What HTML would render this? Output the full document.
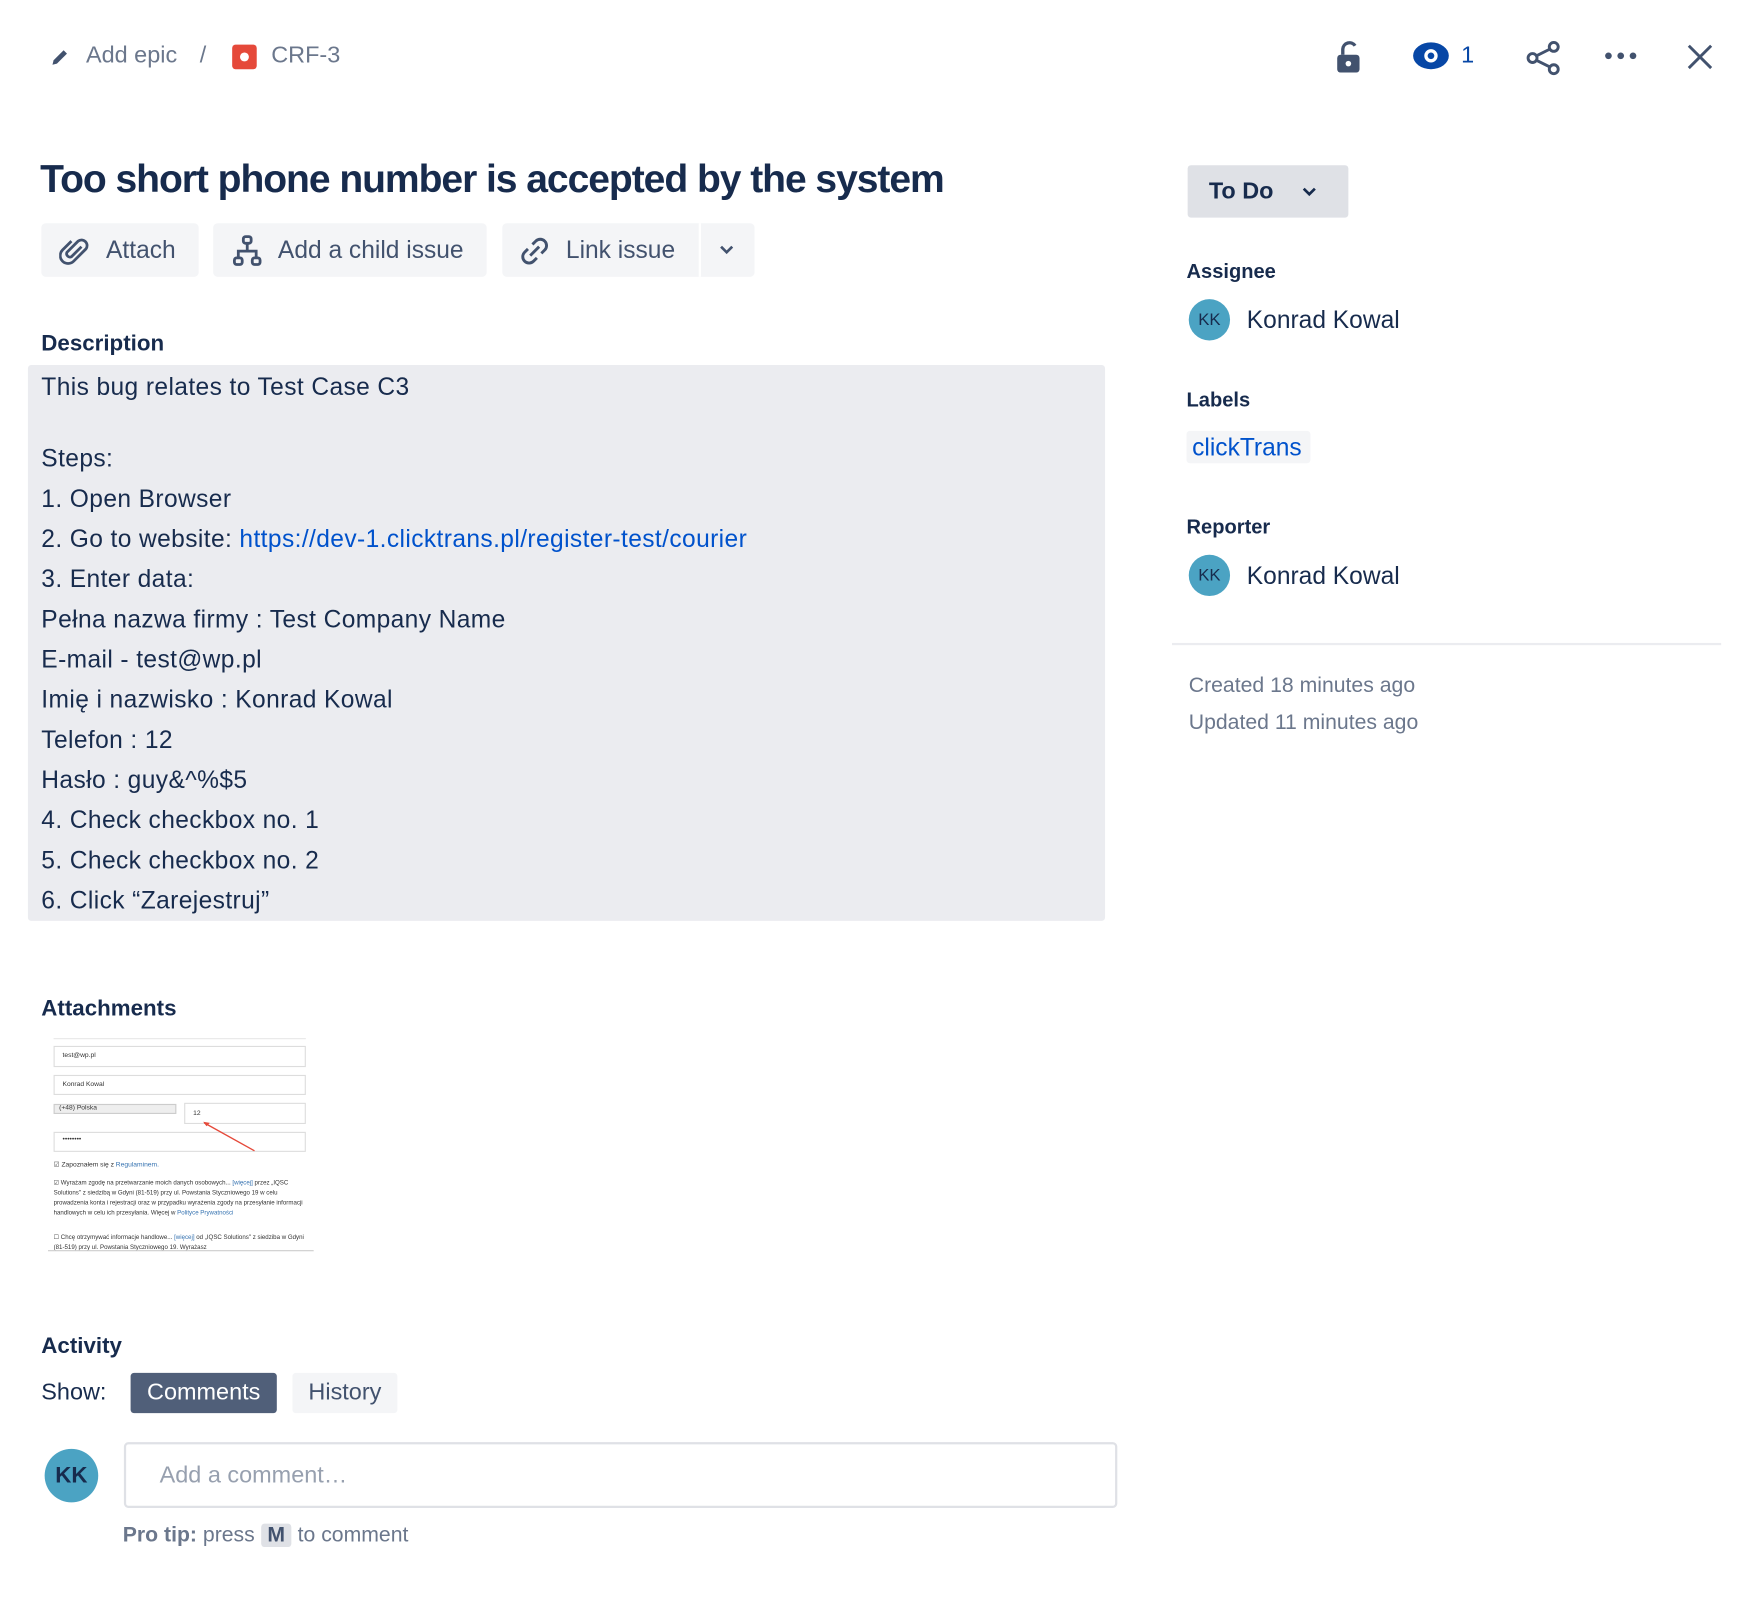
<!DOCTYPE html>
<html><head><meta charset="utf-8"><style>
*{margin:0;padding:0;box-sizing:border-box}
html,body{width:1750px;height:1614px;overflow:hidden;background:#fff}
#w{position:absolute;left:0;top:0;width:1570px;height:1446px;transform:scale(1.1162);transform-origin:0 0;font-family:"Liberation Sans",sans-serif;color:#172b4d}
.a{position:absolute;white-space:nowrap}
.btn{position:absolute;background:#f4f5f7;border-radius:4px;top:200px;height:48px;font-size:22px;color:#42526e;line-height:48px}
.desc div{height:36px;line-height:36px;font-size:22px;letter-spacing:0.35px}
.lbl{font-size:18px;font-weight:bold}
.av{position:absolute;border-radius:50%;background:#4ba3c3;color:#172b4d;text-align:center;font-weight:bold}
.gr{font-size:19px;color:#6b778c}
</style></head><body><div id="w">
<svg class="a" style="left:44px;top:41px" width="20" height="20" viewBox="0 0 20 20"><path d="M3 17l1-4L13 4l3 3-9 9z" fill="#42526e"/></svg>
<div class="a" style="left:77px;top:38px;font-size:21px;color:#6b778c">Add epic</div>
<div class="a" style="left:179px;top:38px;font-size:21px;color:#6b778c">/</div>
<div class="a" style="left:208px;top:40px;width:22px;height:22px;background:#e5493a;border-radius:3px"><div style="position:absolute;left:7px;top:7px;width:8px;height:8px;border-radius:50%;background:#fff"></div></div>
<div class="a" style="left:243px;top:38px;font-size:21px;color:#6b778c">CRF-3</div>
<svg class="a" style="left:1195px;top:35px" width="28" height="32" viewBox="0 0 28 32"><path d="M8 14V9a6 6 0 0 1 11-3" fill="none" stroke="#42526e" stroke-width="3"/><rect x="3" y="14" width="20" height="16" rx="3" fill="#42526e"/><circle cx="13" cy="22" r="2.5" fill="#fff"/></svg>
<svg class="a" style="left:1265px;top:37px" width="34" height="26" viewBox="0 0 34 26"><ellipse cx="17" cy="13" rx="16" ry="12" fill="#0747a6"/><circle cx="17" cy="13" r="6" fill="#fff"/><circle cx="17" cy="13" r="3" fill="#0747a6"/></svg>
<div class="a" style="left:1309px;top:38px;font-size:21px;color:#0747a6">1</div>
<svg class="a" style="left:1366px;top:35px" width="34" height="34" viewBox="0 0 34 34"><g fill="none" stroke="#42526e" stroke-width="2.6"><circle cx="26" cy="7" r="4"/><circle cx="7" cy="17" r="4"/><circle cx="26" cy="27" r="4"/><path d="M10.5 15l12-6M10.5 19l12 6"/></g></svg>
<svg class="a" style="left:1436px;top:45px" width="34" height="10" viewBox="0 0 34 10"><circle cx="5" cy="5" r="3" fill="#42526e"/><circle cx="16" cy="5" r="3" fill="#42526e"/><circle cx="27" cy="5" r="3" fill="#42526e"/></svg>
<svg class="a" style="left:1510px;top:38px" width="26" height="26" viewBox="0 0 26 26"><path d="M3 3l20 20M23 3L3 23" stroke="#42526e" stroke-width="2.6"/></svg>
<div class="a" style="left:36px;top:141px;font-size:35px;font-weight:bold;letter-spacing:-0.95px">Too short phone number is accepted by the system</div>
<div class="btn" style="left:37px;width:141px"><svg class="a" style="left:16px;top:11px" width="28" height="28" viewBox="0 0 28 28"><path d="M20 10l-9 9a3 3 0 0 1-4-4l10-10a5 5 0 0 1 7 7L13 23a7 7 0 0 1-10-10l8-8" fill="none" stroke="#42526e" stroke-width="2.5"/></svg><span class="a" style="left:58px">Attach</span></div>
<div class="btn" style="left:191px;width:245px"><svg class="a" style="left:16px;top:10px" width="30" height="30" viewBox="0 0 30 30"><g fill="none" stroke="#42526e" stroke-width="2.5"><rect x="11" y="2" width="7" height="6" rx="2"/><rect x="3" y="21" width="7" height="6" rx="2"/><rect x="19" y="21" width="7" height="6" rx="2"/><path d="M14.5 8v7M6.5 21v-6h16v6"/></g></svg><span class="a" style="left:58px">Add a child issue</span></div>
<div class="btn" style="left:450px;width:226px"><svg class="a" style="left:14px;top:10px" width="30" height="30" viewBox="0 0 30 30"><g fill="none" stroke="#42526e" stroke-width="2.6"><path d="M13 9l3-3a5 5 0 0 1 8 8l-3 3"/><path d="M17 21l-3 3a5 5 0 0 1-8-8l3-3"/><path d="M11 19l8-8"/></g></svg><span class="a" style="left:57px">Link issue</span><div class="a" style="left:176px;top:0;width:2px;height:48px;background:#fff"></div><svg class="a" style="left:195px;top:20px" width="12" height="8" viewBox="0 0 12 8"><path d="M1 1l5 5 5-5" fill="none" stroke="#42526e" stroke-width="2.4"/></svg></div>
<div class="a lbl" style="left:37px;top:297px;font-size:20px">Description</div>
<div class="a desc" style="left:25px;top:327px;width:965px;height:498px;background:#ebecf0;border-radius:3px;padding:2px 12px">
<div>This bug relates to Test Case C3</div>
<div style="height:28px"></div>
<div>Steps:</div>
<div>1. Open Browser</div>
<div>2. Go to website: <span style="color:#0052cc">https://dev-1.clicktrans.pl/register-test/courier</span></div>
<div>3. Enter data:</div>
<div>Pełna nazwa firmy : Test Company Name</div>
<div>E-mail - test@wp.pl</div>
<div>Imię i nazwisko : Konrad Kowal</div>
<div>Telefon : 12</div>
<div>Hasło : guy&amp;^%$5</div>
<div>4. Check checkbox no. 1</div>
<div>5. Check checkbox no. 2</div>
<div>6. Click “Zarejestruj”</div>
</div>
<div class="a lbl" style="left:37px;top:893px;font-size:20px">Attachments</div>
<div class="a" style="left:43px;top:930px;width:238px;height:191px;border-bottom:1px solid #ccc;overflow:hidden;font-size:6px;color:#333">
<div class="a" style="left:5px;top:0;width:226px;height:1px;background:#e5e5e5"></div>
<div class="a" style="left:5px;top:7px;width:226px;height:19px;border:1px solid #ddd;padding:5px 7px">test@wp.pl</div>
<div class="a" style="left:5px;top:33px;width:226px;height:18px;border:1px solid #ddd;padding:5px 7px">Konrad Kowal</div>
<div class="a" style="left:5px;top:59px;width:110px;height:9px;background:#eee;border:1px solid #ccc;padding:0 4px">(+48) Polska</div>
<div class="a" style="left:122px;top:58px;width:109px;height:19px;border:1px solid #ddd;padding:6px 7px">12</div>
<div class="a" style="left:5px;top:84px;width:226px;height:18px;border:1px solid #ddd;padding:3px 7px">••••••••</div>
<svg class="a" style="left:135px;top:72px" width="60" height="32"><path d="M50 29L5 4" stroke="#e5493a" stroke-width="1.2"/><path d="M4 3l6 1-3 3z" fill="#e5493a"/></svg>
<div class="a" style="left:5px;top:110px">☑ Zapoznałem się z <span style="color:#3572b0">Regulaminem.</span></div>
<div class="a" style="left:5px;top:126px;line-height:9px;white-space:normal;width:226px;font-size:5.5px">☑ Wyrażam zgodę na przetwarzanie moich danych osobowych... <span style="color:#3572b0">[więcej]</span> przez „IQSC Solutions" z siedzibą w Gdyni (81-519) przy ul. Powstania Styczniowego 19 w celu prowadzenia konta i rejestracji oraz w przypadku wyrażenia zgody na przesyłanie informacji handlowych w celu ich przesyłania. Więcej w <span style="color:#3572b0">Polityce Prywatności</span></div>
<div class="a" style="left:5px;top:175px;line-height:9px;white-space:normal;width:226px;font-size:5.5px">☐ Chcę otrzymywać informacje handlowe... <span style="color:#3572b0">[więcej]</span> od „IQSC Solutions" z siedziba w Gdyni (81-519) przy ul. Powstania Styczniowego 19. Wyrażasz</div>
</div>
<div class="a lbl" style="left:37px;top:1195px;font-size:20px">Activity</div>
<div class="a" style="left:37px;top:1236px;font-size:21px">Show:</div>
<div class="a" style="left:117px;top:1230px;width:131px;height:36px;background:#505f79;border-radius:3px;color:#fff;font-size:21px;line-height:36px;text-align:center">Comments</div>
<div class="a" style="left:262px;top:1230px;width:94px;height:36px;background:#f4f5f7;border-radius:3px;color:#42526e;font-size:21px;line-height:36px;text-align:center">History</div>
<div class="av" style="left:40px;top:1298px;width:48px;height:48px;line-height:48px;font-size:20px">KK</div>
<div class="a" style="left:111px;top:1292px;width:890px;height:59px;border:2px solid #dfe1e6;border-radius:4px;font-size:21px;color:#97a0af;padding:0 0 0 30px;line-height:55px">Add a comment…</div>
<div class="a" style="left:110px;top:1365px;font-size:19px;color:#6b778c"><b>Pro tip:</b> press <span style="background:#dfe1e6;border-radius:3px;padding:0 6px;font-weight:bold;color:#42526e">M</span> to comment</div>
<div class="a" style="left:1064px;top:148px;width:144px;height:47px;background:#dfe1e6;border-radius:3px;font-size:21px;font-weight:bold;line-height:47px;padding-left:19px">To Do<svg class="a" style="left:103px;top:20px" width="12" height="8" viewBox="0 0 12 8"><path d="M1 1l5 5 5-5" fill="none" stroke="#172b4d" stroke-width="2.4"/></svg></div>
<div class="a lbl" style="left:1063px;top:233px">Assignee</div>
<div class="av" style="left:1065px;top:268px;width:37px;height:37px;line-height:37px;font-size:15px;font-weight:normal">KK</div>
<div class="a" style="left:1117px;top:274px;font-size:22px">Konrad Kowal</div>
<div class="a lbl" style="left:1063px;top:348px">Labels</div>
<div class="a" style="left:1063px;top:386px;width:111px;height:29px;background:#f4f5f7;border-radius:3px;font-size:22px;color:#0052cc;line-height:29px;padding-left:5px">clickTrans</div>
<div class="a lbl" style="left:1063px;top:462px">Reporter</div>
<div class="av" style="left:1065px;top:497px;width:37px;height:37px;line-height:37px;font-size:15px;font-weight:normal">KK</div>
<div class="a" style="left:1117px;top:503px;font-size:22px">Konrad Kowal</div>
<div class="a" style="left:1050px;top:576px;width:492px;height:2px;background:#ebecf0"></div>
<div class="a gr" style="left:1065px;top:604px">Created 18 minutes ago</div>
<div class="a gr" style="left:1065px;top:637px">Updated 11 minutes ago</div>
</div></body></html>
